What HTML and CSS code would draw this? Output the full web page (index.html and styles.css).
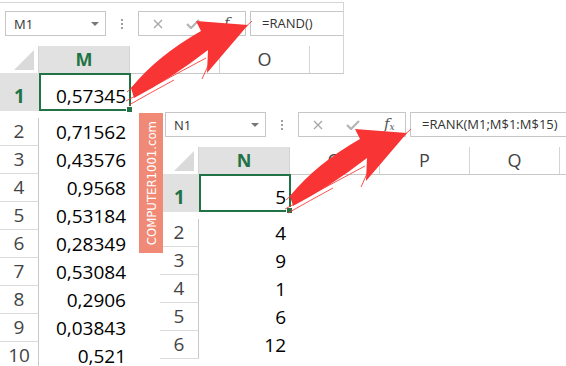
FILE: index.html
```html
<!DOCTYPE html>
<html lang="en">
<head>
  <meta charset="UTF-8" />
  <title>RAND and RANK</title>
  <link rel="stylesheet" href="styles.css">
</head>
<body>
  <!-- first shot: random numbers -->
  <div class="sheet sheet-rand">
    <div class="formula-bar">
      <div class="name-box"><span>M1</span><span class="caret"></span></div>
      <div class="grip"><i></i><i></i><i></i></div>
      <div class="fx-buttons">
        <svg class="ic-cancel" width="10" height="10" viewBox="0 0 10 10"><path d="M1 1L9 9M9 1L1 9" /></svg>
        <svg class="ic-enter" width="14" height="10" viewBox="0 0 14 10"><path d="M1 5L5 9L13 1" /></svg>
        <span class="fx"><i>f</i><sub>x</sub></span>
      </div>
      <div class="formula">=RAND()</div>
    </div>
    <div class="col-heads">
      <div class="corner"><span class="tri"></span></div>
      <div class="col-head wide active">M</div>
      <div class="col-head">N</div>
      <div class="col-head">O</div>
      <div class="col-head rest"></div>
    </div>
    <div class="row row-first">
      <div class="row-head active">1</div>
      <div class="cell active">0,57345</div>
    </div>
    <div class="rows">
      <div class="row"><div class="row-head">2</div><div class="cell">0,71562</div></div>
      <div class="row"><div class="row-head">3</div><div class="cell">0,43576</div></div>
      <div class="row"><div class="row-head">4</div><div class="cell">0,9568</div></div>
      <div class="row"><div class="row-head">5</div><div class="cell">0,53184</div></div>
      <div class="row"><div class="row-head">6</div><div class="cell">0,28349</div></div>
      <div class="row"><div class="row-head">7</div><div class="cell">0,53084</div></div>
      <div class="row"><div class="row-head">8</div><div class="cell">0,2906</div></div>
      <div class="row"><div class="row-head">9</div><div class="cell">0,03843</div></div>
      <div class="row"><div class="row-head">10</div><div class="cell">0,521</div></div>
    </div>
  </div>

  <!-- second shot: ranks -->
  <div class="sheet sheet-rank">
    <div class="formula-bar">
      <div class="name-box"><span>N1</span><span class="caret"></span></div>
      <div class="grip"><i></i><i></i><i></i></div>
      <div class="fx-buttons">
        <svg class="ic-cancel" width="10" height="10" viewBox="0 0 10 10"><path d="M1 1L9 9M9 1L1 9" /></svg>
        <svg class="ic-enter" width="14" height="10" viewBox="0 0 14 10"><path d="M1 5L5 9L13 1" /></svg>
        <span class="fx"><i>f</i><sub>x</sub></span>
      </div>
      <div class="formula">=RANK(M1;M$1:M$15)</div>
    </div>
    <div class="col-heads">
      <div class="corner"><span class="tri"></span></div>
      <div class="col-head wide active">N</div>
      <div class="col-head">O</div>
      <div class="col-head">P</div>
      <div class="col-head">Q</div>
      <div class="col-head rest"></div>
    </div>
    <div class="row row-first">
      <div class="row-head active">1</div>
      <div class="cell active">5</div>
    </div>
    <div class="rows">
      <div class="row"><div class="row-head">2</div><div class="cell">4</div></div>
      <div class="row"><div class="row-head">3</div><div class="cell">9</div></div>
      <div class="row"><div class="row-head">4</div><div class="cell">1</div></div>
      <div class="row"><div class="row-head">5</div><div class="cell">6</div></div>
      <div class="row"><div class="row-head">6</div><div class="cell">12</div></div>
    </div>
  </div>

  <div class="watermark"><span>COMPUTER1001.com</span></div>

  <svg class="arrows" width="566" height="366" viewBox="0 0 566 366">
    <g id="arrow">
      <path class="brush" d="M131 88Q157 56 201 31L196 21L248 25L207 73L208 50Q172 78 134 98Z" />
      <path class="wisp" d="M126 101Q165 80 206 58" />
      <path class="wisp" d="M129 105Q150 93 174 80" />
      <path class="wisp" d="M202 79L212 57" />
      <path class="wisp" d="M127 92Q148 72 174 57" />
      <path class="wisp" d="M241 31L252 21" />
    </g>
    <use href="#arrow" transform="translate(159 108)" />
  </svg>
</body>
</html>
```

FILE: styles.css
```css
body {
  margin: 0;
  width: 566px;
  height: 366px;
  position: relative;
  overflow: hidden;
  background: #fff;
  font-family: "Open Sans", sans-serif;
  color: #000;
}

.sheet { position: absolute; background: #fff; overflow: hidden; }
.sheet-rand { left: 0; top: 2px; width: 344px; height: 364px; }
.sheet-rank { left: 160px; top: 101px; width: 406px; height: 265px; }

/* formula bar */
.formula-bar {
  display: flex;
  align-items: flex-start;
  height: 46px;
  box-sizing: border-box;
  padding: 11px 0 0 5px;
}
.sheet-rand .formula-bar {
  height: 44px;
  padding-top: 8px;
  border-top: 1px solid #d4d4d4;
  border-right: 1px solid #d4d4d4;
}
.name-box {
  width: 101px;
  height: 25px;
  box-sizing: border-box;
  border: 1px solid #c6c6c6;
  display: flex;
  align-items: center;
  justify-content: space-between;
  padding: 0 6px 0 8px;
  font-size: 13px;
  color: #333;
}
.caret {
  width: 0;
  height: 0;
  border-left: 4px solid transparent;
  border-right: 4px solid transparent;
  border-top: 4px solid #777;
}
.grip {
  width: 32px;
  height: 25px;
  display: flex;
  flex-direction: column;
  align-items: center;
  justify-content: center;
  gap: 2px;
}
.grip i { width: 2px; height: 2px; background: #a0a0a0; }
.fx-buttons {
  width: 108px;
  height: 25px;
  box-sizing: border-box;
  border: 1px solid #c6c6c6;
  display: flex;
  align-items: center;
  padding-left: 14px;
}
.ic-cancel { stroke: #a6a6a6; stroke-width: 1.3; fill: none; }
.ic-enter { margin-left: 23px; stroke: #b4b4b4; stroke-width: 2.2; fill: none; }
.fx {
  margin-left: 24px;
  font-family: "DejaVu Serif", serif;
  color: #555;
  font-size: 15px;
  line-height: 1;
}
.fx sub { font-size: 9px; font-style: italic; vertical-align: -1px; }
.formula {
  flex: 1;
  height: 25px;
  box-sizing: border-box;
  margin-left: 4px;
  border: 1px solid #c6c6c6;
  border-right: none;
  padding-left: 11px;
  font-size: 13px;
  line-height: 23px;
  color: #333;
  white-space: nowrap;
}

/* headers */
.col-heads {
  display: flex;
  height: 28px;
  box-sizing: border-box;
  border-bottom: 1px solid #c8c8c8;
}
.sheet-rand .col-heads { border-right: 1px solid #d4d4d4; }
.corner {
  width: 39px;
  flex: none;
  display: flex;
  align-items: flex-end;
  justify-content: flex-end;
  padding: 0 4px 3px 0;
  box-sizing: border-box;
  border-right: 1px solid #d4d4d4;
}
.tri {
  width: 0;
  height: 0;
  border-left: 20px solid transparent;
  border-bottom: 20px solid #dadada;
}
.col-head {
  width: 90px;
  flex: none;
  box-sizing: border-box;
  border-right: 1px solid #d4d4d4;
  text-align: center;
  font-size: 18px;
  line-height: 27px;
  color: #444;
}
.col-head.wide { width: 91px; }
.col-head.rest { flex: 1; border-right: none; }
.col-head.active, .row-head.active {
  background: #e1e1e1;
  color: #217346;
  font-weight: bold;
}

/* rows */
.row { display: flex; height: 28px; }
.row-first { height: 38px; margin-top: -1px; }
.rows { margin-top: 7px; }
.row-head {
  width: 39px;
  flex: none;
  box-sizing: border-box;
  border-right: 1px solid #c8c8c8;
  border-bottom: 1px solid #dadada;
  text-align: center;
  font-size: 19px;
  line-height: 27px;
  color: #444;
}
.row-first .row-head {
  border: none;
  display: flex;
  align-items: flex-end;
  justify-content: center;
  line-height: 26px;
  padding-bottom: 2px;
}
.cell {
  width: 91px;
  flex: none;
  box-sizing: border-box;
  padding-right: 4px;
  text-align: right;
  font-size: 19px;
  line-height: 28px;
}
.cell.active {
  position: relative;
  width: 92px;
  border: 2px solid #217346;
  display: flex;
  align-items: flex-end;
  justify-content: flex-end;
  padding-right: 3px;
  line-height: 26px;
}
.cell.active::after {
  content: "";
  position: absolute;
  right: -4px;
  bottom: -4px;
  width: 5px;
  height: 5px;
  background: #217346;
  border: 1px solid #fff;
}

/* watermark */
.watermark {
  position: absolute;
  left: 139px;
  top: 113px;
  width: 24px;
  height: 140px;
  background: #f08a76;
  display: flex;
  align-items: center;
  justify-content: center;
}
.watermark span {
  writing-mode: vertical-rl;
  transform: rotate(180deg);
  font-family: "Liberation Sans Narrow", "DejaVu Sans Condensed", sans-serif;
  font-size: 13px;
  color: #fff;
  letter-spacing: 0;
  white-space: nowrap;
}

/* arrows */
.arrows { position: absolute; left: 0; top: 0; pointer-events: none; }
.brush { fill: #f83434; }
.wisp { fill: none; stroke: #f83434; stroke-width: 1; opacity: 0.85; }
```
